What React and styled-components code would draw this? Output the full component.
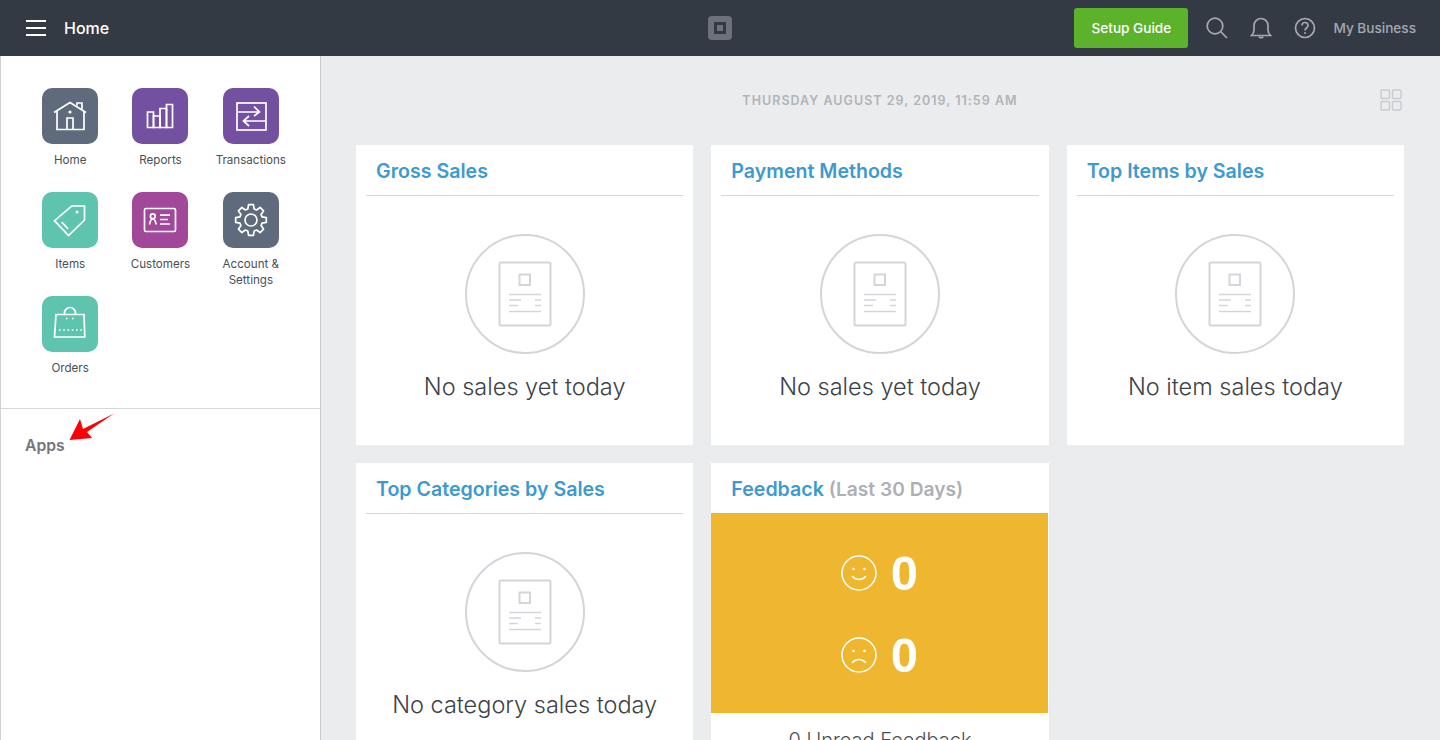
import React from 'react'
import styled, { createGlobalStyle } from 'styled-components'

const font = `Inter, "Noto Sans", "Liberation Sans", sans-serif`

const apps = [
  { label: 'Home', color: '#5f6b7c', icon: 'home' },
  { label: 'Reports', color: '#7351a0', icon: 'reports' },
  { label: 'Transactions', color: '#7351a0', icon: 'transactions' },
  { label: 'Items', color: '#5fc4ae', icon: 'items' },
  { label: 'Customers', color: '#a1489a', icon: 'customers' },
  { label: 'Account & Settings', color: '#5f6b7c', icon: 'settings' },
  { label: 'Orders', color: '#5fc4ae', icon: 'orders' },
]

// eight teeth round the centre of the tile
const gearPath = () => {
  const at = (r, deg) => {
    const a = (deg * Math.PI) / 180
    return `${(28 + r * Math.cos(a)).toFixed(2)} ${(28 + r * Math.sin(a)).toFixed(2)}`
  }
  let d = ''
  for (let i = 0; i < 8; i++) {
    const mid = i * 45 - 90
    d += `${i === 0 ? 'M' : 'L'}${at(11.5, mid - 16)} L${at(15.5, mid - 9)} L${at(15.5, mid + 9)} L${at(11.5, mid + 16)} `
  }
  return d + 'Z'
}

const glyphs = {
  home: (
    <>
      <path d="M12 24.5 28 14.5 44 24.5" />
      <path d="M15 23v18.5h27V23" />
      <path d="M25 41.5V30h6v11.5" />
      <path d="M35 17.5V15h5v6" />
      <circle cx="28" cy="24" r="1.6" fill="#fff" stroke="none" />
    </>
  ),
  reports: (
    <>
      <path d="M15.5 39.5V24h6v15.5z" />
      <path d="M21.5 39.5V28h6.5v11.5z" />
      <path d="M28 39.5V20.5h6.5v19z" />
      <path d="M34.5 39.5V16.5h6v23z" />
    </>
  ),
  transactions: (
    <>
      <rect x="14" y="15" width="29" height="27" />
      <path d="M14 24h22.500M31 18.500l5.500 5.500-5.500 4" />
      <path d="M43 33H20.500M26 28l-5.500 5 5.500 5" />
    </>
  ),
  items: (
    <>
      <path d="M29.700 14H42.500V28L26.500 43.500 12.500 28.700z" />
      <path d="M19.700 30 26 36.800" />
      <circle cx="35" cy="20" r="1.500" fill="#fff" stroke="none" />
    </>
  ),
  customers: (
    <>
      <rect x="12.500" y="16.500" width="31" height="23" rx="1.500" />
      <circle cx="20.800" cy="24.200" r="2.400" />
      <path d="M17.500 32.500c.5-3 2-5.500 3.300-5.500s2.800 2.500 3.500 5.500" />
      <path d="M28 23.200h10M28 27.500h8M28 32h10" />
    </>
  ),
  settings: (
    <>
      <path d={gearPath()} strokeLinejoin="round" />
      <circle cx="28" cy="28" r="6" />
    </>
  ),
  orders: (
    <>
      <path d="M14 18.500h28l.8 22.500H12.500z" />
      <path d="M22.500 18.500v-1.500a5.500 5.500 0 0 1 11 0v1.500" />
      <path d="M24 22.500h1.600M30 22.500h1.600" />
      <path d="M17 34h23.500" strokeDasharray="1.600 2.650" />
    </>
  ),
}

const AppIcon = ({ name }) => (
  <svg width="56" height="56" viewBox="0 0 56 56" fill="none" stroke="#fff" strokeWidth="1.700">
    {glyphs[name]}
  </svg>
)

const Placeholder = () => (
  <svg width="120" height="120" viewBox="0 0 120 120" fill="none" stroke="#d2d5da">
    <circle cx="60" cy="60" r="59" strokeWidth="2" />
    <rect x="34.500" y="28.500" width="51" height="63" rx="1.500" strokeWidth="2" />
    <rect x="54.500" y="40.500" width="10.500" height="10.500" strokeWidth="2" />
    <path d="M44 60.500h32M44 66h12M70 66h6M44 71.500h9M70 71.500h6M44 77.500h32" strokeWidth="1.500" />
  </svg>
)

const Face = ({ sad }) => (
  <svg width="36" height="36" viewBox="0 0 36 36" fill="none" stroke="#fff" strokeWidth="1.500" strokeLinecap="round">
    <circle cx="18" cy="18" r="17" />
    <circle cx="12.500" cy="14" r="1.300" fill="#fff" stroke="none" />
    <circle cx="23.500" cy="14" r="1.300" fill="#fff" stroke="none" />
    <path d={sad ? 'M11.500 25.500c3.500-4 9.500-4 13 0' : 'M11.500 21.500c3.500 4 9.500 4 13 0'} />
  </svg>
)

const Card = ({ title, text }) => (
  <Panel>
    <PanelHead $ruled>
      <PanelTitle>{title}</PanelTitle>
    </PanelHead>
    <EmptyState>
      <Placeholder />
      <EmptyText>{text}</EmptyText>
    </EmptyState>
  </Panel>
)

const App = () => {
  return (
    <Page>
      <GlobalStyle />
      <TopBar>
        <TopLeft>
          <svg width="20" height="16" viewBox="0 0 20 16" stroke="#fff" strokeWidth="2">
            <path d="M0 1h20M0 8h20M0 15h20" />
          </svg>
          <PageName>Home</PageName>
        </TopLeft>
        <Logo>
          <LogoDot />
        </Logo>
        <TopRight>
          <SetupButton>Setup Guide</SetupButton>
          <IconSlot>
            <svg width="22" height="22" viewBox="0 0 22 22" fill="none" stroke="#a5a9b1" strokeWidth="1.700">
              <circle cx="9" cy="9" r="7.800" />
              <path d="M14.700 14.700 21 21" />
            </svg>
          </IconSlot>
          <IconSlot>
            <svg width="22" height="22" viewBox="0 0 22 22" fill="none" stroke="#a5a9b1" strokeWidth="1.700">
              <path d="M1.500 18.500c1.700-1.500 2.500-3 2.500-5.500V8.500a7 7 0 0 1 14 0V13c0 2.500.8 4 2.500 5.500z" />
              <path d="M9 19.500c.3 1.600 3.700 1.600 4 0" />
            </svg>
          </IconSlot>
          <IconSlot>
            <svg width="22" height="22" viewBox="0 0 22 22" fill="none" stroke="#a5a9b1" strokeWidth="1.700">
              <circle cx="11" cy="11" r="9.500" />
              <path d="M8 8.500c0-4 6-4 6 0 0 2.500-3 2.500-3 5" />
              <circle cx="11" cy="16" r="1" fill="#a5a9b1" stroke="none" />
            </svg>
          </IconSlot>
          <BusinessName>My Business</BusinessName>
        </TopRight>
      </TopBar>
      <Content>
        <Sidebar>
          <AppGrid>
            {apps.map((app) => (
              <AppItem key={app.label}>
                <Tile $color={app.color}>
                  <AppIcon name={app.icon} />
                </Tile>
                <AppLabel>{app.label}</AppLabel>
              </AppItem>
            ))}
          </AppGrid>
          <AppsSection>
            <AppsTitle>Apps</AppsTitle>
            <Arrow width="46" height="28" viewBox="0 0 46 28">
              <path d="M0.500 27 11 6 14 16 45 0.500 18 19 23 25z" fill="#fb0007" />
            </Arrow>
          </AppsSection>
        </Sidebar>
        <Main>
          <DateRow>
            <span />
            <DateText>THURSDAY AUGUST 29, 2019, 11:59 AM</DateText>
            <LayoutButton>
              <svg width="22" height="22" viewBox="0 0 22 22" fill="none" stroke="#c9ccd1" strokeWidth="1.500">
                <rect x="1" y="1" width="8.500" height="8.500" rx="1" />
                <rect x="12.500" y="1" width="8.500" height="8.500" rx="1" />
                <rect x="1" y="12.500" width="8.500" height="8.500" rx="1" />
                <rect x="12.500" y="12.500" width="8.500" height="8.500" rx="1" />
              </svg>
            </LayoutButton>
          </DateRow>
          <CardGrid>
            <Card title="Gross Sales" text="No sales yet today" />
            <Card title="Payment Methods" text="No sales yet today" />
            <Card title="Top Items by Sales" text="No item sales today" />
            <Card title="Top Categories by Sales" text="No category sales today" />
            <Panel>
              <PanelHead>
                <PanelTitle>
                  Feedback <Muted>(Last 30 Days)</Muted>
                </PanelTitle>
              </PanelHead>
              <FeedbackBand>
                <FeedbackRow>
                  <Face />
                  <Count>0</Count>
                </FeedbackRow>
                <FeedbackRow>
                  <Face sad />
                  <Count>0</Count>
                </FeedbackRow>
              </FeedbackBand>
              <Unread>0 Unread Feedback</Unread>
            </Panel>
          </CardGrid>
        </Main>
      </Content>
    </Page>
  )
}
export default App

const GlobalStyle = createGlobalStyle`
html, body {
  margin: 0;
  height: 100%;
  overflow: hidden;
  font-family: ${font};
  background: #ebecee;
}
* {
  box-sizing: border-box;
}
`
const Page = styled.div`
height: 100vh;
display: flex;
flex-direction: column;
`
const TopBar = styled.header`
flex: 0 0 56px;
background: #343a44;
display: grid;
grid-template-columns: 1fr auto 1fr;
align-items: center;
padding: 0 24px 0 26px;
`
const TopLeft = styled.div`
display: flex;
align-items: center;
gap: 18px;
`
const PageName = styled.div`
font-size: 16px;
font-weight: 500;
color: #fff;
`
const Logo = styled.div`
width: 24px;
height: 24px;
border: 6px solid #6d727a;
border-radius: 4px;
display: flex;
align-items: center;
justify-content: center;
margin-right: 2px;
`
const LogoDot = styled.div`
width: 6px;
height: 6px;
background: #6d727a;
`
const TopRight = styled.div`
display: flex;
align-items: center;
justify-content: flex-end;
`
const SetupButton = styled.button`
width: 114px;
height: 40px;
padding: 0;
border: none;
border-radius: 3px;
background: #5cb32b;
color: #fff;
font-family: ${font};
font-size: 13.6px;
font-weight: 500;
margin-right: 18px;
`
const IconSlot = styled.div`
width: 22px;
height: 22px;
margin-right: 22px;
`
const BusinessName = styled.div`
font-size: 13.6px;
font-weight: 500;
color: #a5a9b1;
margin-left: -5px;
`
const Content = styled.div`
flex: 1;
min-height: 0;
display: flex;
overflow: hidden;
`
const Sidebar = styled.aside`
flex: 0 0 321px;
background: #fff;
border-left: 1px solid #cfd1d4;
border-right: 1px solid #c8cacd;
`
const AppGrid = styled.div`
height: 353px;
padding: 32px 24px 0 24px;
display: grid;
grid-template-columns: repeat(3, 1fr);
grid-auto-rows: 104px;
border-bottom: 1px solid #d5d7da;
`
const AppItem = styled.div`
display: flex;
flex-direction: column;
align-items: center;
`
const Tile = styled.div`
width: 56px;
height: 56px;
border-radius: 10px;
background: ${({ $color }) => $color};
`
const AppLabel = styled.div`
margin-top: 8px;
font-size: 11.6px;
line-height: 16px;
color: #4a4f57;
text-align: center;
`
const AppsSection = styled.div`
position: relative;
padding: 27px 24px 0;
`
const AppsTitle = styled.div`
font-size: 15.7px;
line-height: 20px;
font-weight: 600;
color: #72767c;
`
const Arrow = styled.svg`
position: absolute;
left: 68px;
top: 4px;
`
const Main = styled.main`
flex: 1;
min-width: 0;
padding: 0 36px 0 35px;
overflow: hidden;
`
const DateRow = styled.div`
height: 89px;
padding-top: 33px;
display: grid;
grid-template-columns: 1fr auto 1fr;
align-items: start;
`
const DateText = styled.div`
margin-top: 1px;
font-size: 12.5px;
line-height: 22px;
font-weight: 600;
letter-spacing: 1.03px;
color: #b1b4b9;
`
const LayoutButton = styled.div`
justify-self: end;
margin-right: 2px;
height: 22px;
`
const CardGrid = styled.div`
display: grid;
grid-template-columns: repeat(3, 1fr);
gap: 18px;
`
const Panel = styled.section`
min-height: 300px;
background: #fff;
`
const PanelHead = styled.div`
height: 51px;
margin: 0 10px;
padding: 2px 10px 0;
display: flex;
align-items: center;
border-bottom: 1px solid ${({ $ruled }) => ($ruled ? '#d5d7da' : 'transparent')};
`
const PanelTitle = styled.div`
font-size: 19.6px;
font-weight: 600;
color: #3d9ad1;
white-space: nowrap;
`
const Muted = styled.span`
font-size: 19.2px;
color: #adb0b6;
`
const EmptyState = styled.div`
padding-top: 38px;
display: flex;
flex-direction: column;
align-items: center;
`
const EmptyText = styled.div`
margin-top: 19px;
font-size: 23.5px;
line-height: 28px;
font-weight: 300;
color: #3d4248;
`
const FeedbackBand = styled.div`
height: 200px;
margin-top: -1px;
margin-right: 1px;
padding-top: 2px;
background: #efb630;
display: flex;
flex-direction: column;
align-items: center;
justify-content: center;
`
const FeedbackRow = styled.div`
height: 82px;
display: flex;
align-items: center;
gap: 14px;
`
const Count = styled.div`
font-family: "Liberation Sans", Arial, sans-serif;
font-size: 49px;
font-weight: 700;
color: #fff;
`
const Unread = styled.div`
padding-top: 15px;
font-size: 20px;
line-height: 24px;
font-weight: 300;
color: #4a4f57;
text-align: center;
`
